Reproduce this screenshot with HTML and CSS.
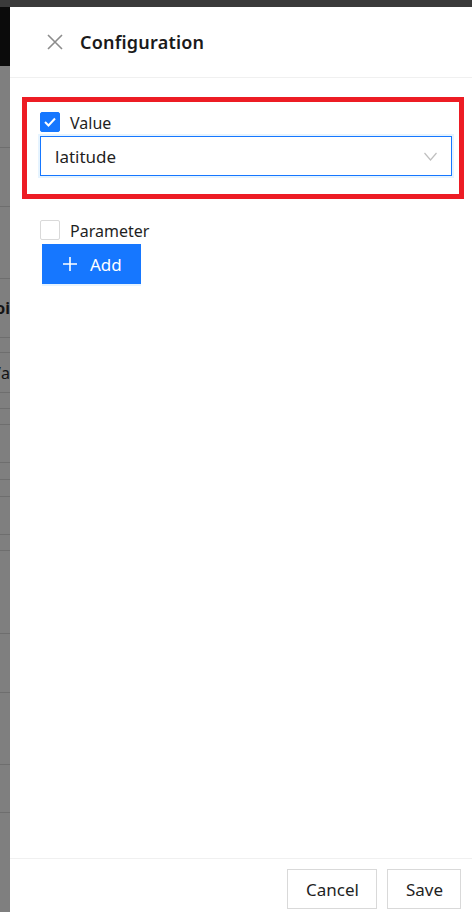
FILE: index.html
```html
<!DOCTYPE html>
<html>
<head>
	<meta charset="utf-8">
	<title>Configuration</title>
	<link rel="stylesheet" href="styles.css">
</head>
<body>
	<div class="topbar"></div>

	<div class="screen">
		<!-- table behind the drawer, under the mask -->
		<div class="backdrop">
			<div class="bd-head"></div>
			<div class="bd-row h82"></div>
			<div class="bd-row h59"></div>
			<div class="bd-row h72"></div>
			<div class="bd-row h59 bold"><span>oi</span></div>
			<div class="bd-row h15"></div>
			<div class="bd-row h40"><span>/a</span></div>
			<div class="bd-row h16"></div>
			<div class="bd-row h16"></div>
			<div class="bd-row h38"></div>
			<div class="bd-row h17"></div>
			<div class="bd-row h17"></div>
			<div class="bd-row h38"></div>
			<div class="bd-row h16"></div>
			<div class="bd-row h83"></div>
			<div class="bd-row h59"></div>
			<div class="bd-row h72"></div>
			<div class="bd-row h48"></div>
		</div>

		<div class="drawer">
			<div class="drawer-header">
				<button class="close" type="button" aria-label="Close">
					<svg width="16" height="16" viewBox="0 0 16 16">
						<path d="M1 1 L15 15 M15 1 L1 15" stroke="#8c8c8c" stroke-width="1.6" fill="none"/>
					</svg>
				</button>
				<div class="title">Configuration</div>
			</div>

			<div class="drawer-body">
				<div class="highlight">
					<label class="check">
						<span class="box checked">
							<svg width="12" height="10" viewBox="0 0 12 10">
								<path d="M1 5 L4.5 8.5 L11 1.5" stroke="#fff" stroke-width="2" fill="none"/>
							</svg>
						</span>
						<span class="check-label">Value</span>
					</label>
					<div class="select">
						<span class="select-value">latitude</span>
						<svg class="arrow" width="13" height="9" viewBox="0 0 13 9">
							<path d="M0.5 1 L6.5 8 L12.5 1" stroke="#bfbfbf" stroke-width="1.2" fill="none"/>
						</svg>
					</div>
				</div>

				<label class="check param">
					<span class="box"></span>
					<span class="check-label">Parameter</span>
				</label>
				<button class="btn-primary" type="button">
					<svg width="14" height="14" viewBox="0 0 14 14">
						<path d="M7 0 V14 M0 7 H14" stroke="#fff" stroke-width="1.6" fill="none"/>
					</svg>
					<span>Add</span>
				</button>
			</div>

			<div class="drawer-footer">
				<button class="btn" type="button">Cancel</button>
				<button class="btn" type="button">Save</button>
			</div>
		</div>
	</div>
</body>
</html>
```

FILE: styles.css
```css
body, html {
	height: 100%;
}

body {
	margin: 0;
	padding: 0;
	display: flex;
	flex-direction: column;
	overflow: hidden;
	font-family: "Noto Sans", "Open Sans", sans-serif;
	color: #1f1f1f;
	background: #fff;
}

button {
	font-family: inherit;
}

.topbar {
	height: 7px;
	background: #3a3a3a;
	flex-shrink: 0;
}

.screen {
	flex: 1;
	display: flex;
	min-height: 0;
}

/* masked table on the left */

.backdrop {
	width: 10px;
	flex-shrink: 0;
	background: #7f7f7f;
	overflow: hidden;
}

.bd-head {
	height: 59px;
	background: #0b0b0b;
}

.bd-row {
	box-sizing: border-box;
	border-bottom: 1px solid #6e6e6e;
	display: flex;
	align-items: center;
	justify-content: flex-end;
	font-size: 16px;
	color: #141414;
	white-space: nowrap;
}

.bd-row.bold {
	font-weight: 700;
}

.h15 { height: 15px; }
.h16 { height: 16px; }
.h17 { height: 17px; }
.h38 { height: 38px; }
.h40 { height: 40px; }
.h48 { height: 48px; }
.h59 { height: 59px; }
.h72 { height: 72px; }
.h82 { height: 82px; }
.h83 { height: 83px; }

/* drawer */

.drawer {
	flex: 1;
	display: flex;
	flex-direction: column;
	background: #fff;
	min-width: 0;
}

.drawer-header {
	height: 70px;
	flex-shrink: 0;
	display: flex;
	align-items: center;
	padding: 0 0 0 37px;
	border-bottom: 1px solid #f0f0f0;
}

.close {
	border: 0;
	background: none;
	padding: 0;
	width: 16px;
	height: 16px;
	margin-right: 17px;
	display: flex;
}

.title {
	font-size: 18px;
	font-weight: 600;
	letter-spacing: 0.2px;
	color: #1a1a1a;
}

.drawer-body {
	flex: 1;
	padding: 19px 8px 0 12px;
}

.highlight {
	border: 5px solid #ed1c24;
	padding: 10px 7px 18px 13px;
}

.check {
	display: flex;
	align-items: center;
	gap: 10px;
	height: 20px;
	font-size: 16px;
	color: #1f1f1f;
}

.check-label {
	padding-top: 2px;
}

.box {
	box-sizing: border-box;
	width: 20px;
	height: 20px;
	border: 1px solid #d9d9d9;
	border-radius: 2px;
	background: #fff;
	display: flex;
	align-items: center;
	justify-content: center;
}

.box.checked {
	background: #1677ff;
	border-color: #1677ff;
}

.select {
	box-sizing: border-box;
	margin-top: 4px;
	height: 40px;
	border: 1px solid #1677ff;
	box-shadow: 0 0 0 2px rgba(5, 145, 255, 0.1);
	display: flex;
	align-items: center;
	justify-content: space-between;
	padding: 0 14px 0 14px;
	font-size: 17px;
}

.param {
	margin: 21px 0 0 18px;
}

.btn-primary {
	margin: 4px 0 0 20px;
	width: 99px;
	height: 40px;
	border: 0;
	background: #1677ff;
	color: #fff;
	font-size: 17px;
	display: flex;
	align-items: center;
	padding: 0 0 0 21px;
	gap: 13px;
	box-shadow: 0 2px 0 rgba(5, 145, 255, 0.1);
}

.drawer-footer {
	flex-shrink: 0;
	border-top: 1px solid #f0f0f0;
	display: flex;
	justify-content: flex-end;
	gap: 10px;
	padding: 10px 11px 3px 0;
}

.btn {
	height: 40px;
	padding: 0 17px 0 18px;
	border: 1px solid #d9d9d9;
	background: #fff;
	color: #1f1f1f;
	font-size: 17px;
}
```
